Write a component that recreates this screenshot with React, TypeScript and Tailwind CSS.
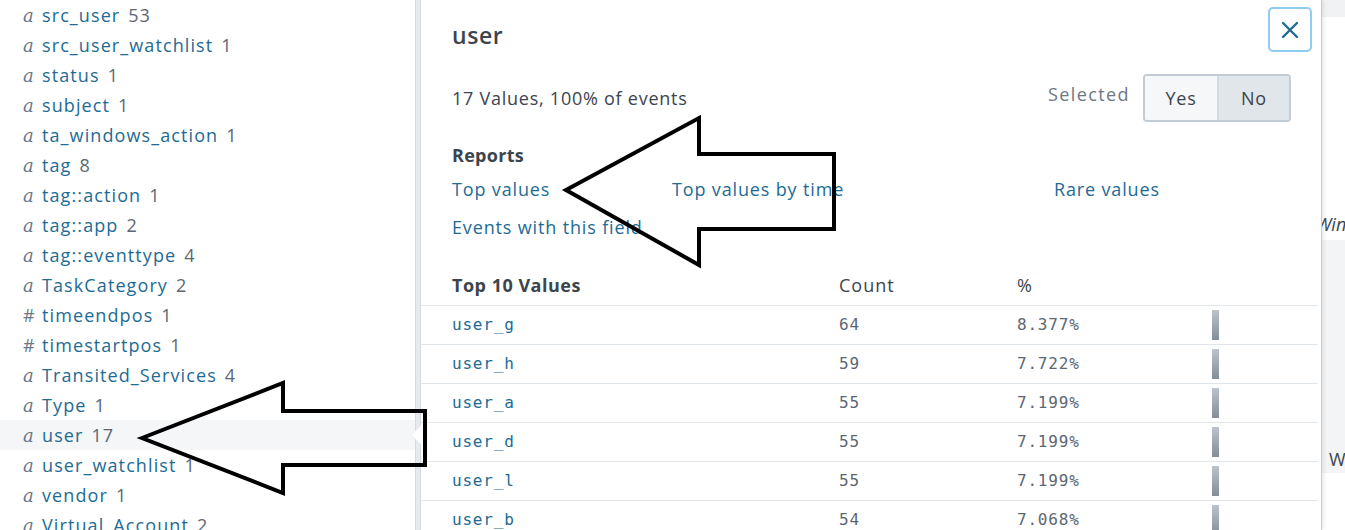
import React from "react";

type Field = { type: "a" | "#"; name: string; count: number };

const fields: Field[] = [
  { type: "a", name: "src_user", count: 53 },
  { type: "a", name: "src_user_watchlist", count: 1 },
  { type: "a", name: "status", count: 1 },
  { type: "a", name: "subject", count: 1 },
  { type: "a", name: "ta_windows_action", count: 1 },
  { type: "a", name: "tag", count: 8 },
  { type: "a", name: "tag::action", count: 1 },
  { type: "a", name: "tag::app", count: 2 },
  { type: "a", name: "tag::eventtype", count: 4 },
  { type: "a", name: "TaskCategory", count: 2 },
  { type: "#", name: "timeendpos", count: 1 },
  { type: "#", name: "timestartpos", count: 1 },
  { type: "a", name: "Transited_Services", count: 4 },
  { type: "a", name: "Type", count: 1 },
  { type: "a", name: "user", count: 17 },
  { type: "a", name: "user_watchlist", count: 1 },
  { type: "a", name: "vendor", count: 1 },
  { type: "a", name: "Virtual_Account", count: 2 },
];

const topValues = [
  { value: "user_g", count: 64, pct: "8.377%" },
  { value: "user_h", count: 59, pct: "7.722%" },
  { value: "user_a", count: 55, pct: "7.199%" },
  { value: "user_d", count: 55, pct: "7.199%" },
  { value: "user_l", count: 55, pct: "7.199%" },
  { value: "user_b", count: 54, pct: "7.068%" },
];

const sans = "font-['Open_Sans','Lato',sans-serif]";

const FieldRow: React.FC<{ field: Field; active?: boolean }> = ({ field, active }) => (
  <div className={"flex items-center h-[30px] pl-[23px] text-[18px] " + (active ? "bg-[#f4f6f8]" : "")}>
    <span
      className={
        "w-[19px] text-[#6b7785] " +
        (field.type === "a" ? "font-['DejaVu_Serif',serif] italic text-[18px]" : "text-[18px]")
      }
    >
      {field.type}
    </span>
    <span className="text-[#1e6b94] tracking-[1.1px]">{field.name}</span>
    <span className="ml-[8px] text-[#5c6773] tracking-[1px]">{field.count}</span>
  </div>
);

const Arrows: React.FC = () => (
  <svg className="absolute inset-0 pointer-events-none" width="1345" height="530" viewBox="0 0 1345 530">
    <polygon
      points="142,438 283,383 283,411 425,411 425,465 283,465 283,493"
      fill="none"
      stroke="#000"
      strokeWidth="4"
      strokeLinejoin="miter"
    />
    <polygon
      points="566,190 699,118 699,154 834,154 834,229 699,229 699,265"
      fill="none"
      stroke="#000"
      strokeWidth="4"
      strokeLinejoin="miter"
    />
  </svg>
);

export default function App() {
  return (
    <div className={"relative w-[1345px] h-[530px] overflow-hidden bg-white flex " + sans}>
      {/* field list */}
      <div className="w-[415px] shrink-0 overflow-hidden">
        {fields.map((f) => (
          <FieldRow key={f.name} field={f} active={f.name === "user"} />
        ))}
      </div>
      {/* scrollbar strip */}
      <div className="w-[6px] shrink-0 bg-[#e6e9ed] border-x border-[#d5dae0]" />

      {/* popover */}
      <div className="relative w-[901px] shrink-0 bg-white border-r border-[#c9ced4] shadow-[2px_0_3px_rgba(0,0,0,0.08)]">
        <div className="absolute left-[-10px] top-[425px] w-0 h-0 border-y-[10px] border-y-transparent border-r-[10px] border-r-[#eef0f3]" />
        <div className="absolute left-[-9px] top-[426px] w-0 h-0 border-y-[9px] border-y-transparent border-r-[9px] border-r-white" />

        <div className="flex items-start justify-between pl-[31px] pr-[9px] pt-[7px] h-[74px]">
          <div className="text-[23px] font-semibold text-[#3c444d] leading-none mt-[17px] tracking-[0.6px]">user</div>
          <button className="w-[44px] h-[45px] rounded-[5px] border-2 border-[#8ecdf2] flex items-center justify-center text-[#1e6b94]">
            <svg width="18" height="18" viewBox="0 0 18 18">
              <path d="M2 2L16 16M16 2L2 16" stroke="currentColor" strokeWidth="2.4" strokeLinecap="round" />
            </svg>
          </button>
        </div>

        <div className="flex items-center justify-between pl-[31px] pr-[30px] h-[48px] tracking-[0.75px]">
          <div className="text-[18px] text-[#3c444d]">17 Values, 100% of events</div>
          <div className="flex items-center">
            <span className="text-[18px] text-[#6b7785] mr-[13px] -mt-[8px] tracking-[1.4px]">Selected</span>
            <div className="flex h-[48px] rounded-[4px] border-2 border-[#c3cbd4] overflow-hidden text-[18px] text-[#3c444d]">
              <div className="w-[74px] flex items-center justify-center bg-[#f5f7f9] border-r-2 border-[#d5dae0]">Yes</div>
              <div className="w-[70px] flex items-center justify-center bg-[#e1e6eb]">No</div>
            </div>
          </div>
        </div>

        <div className="pl-[31px] mt-[21px] tracking-[0.85px]">
          <div className="text-[18px] font-bold text-[#3c444d] h-[24px] leading-[24px] tracking-[0.3px]">Reports</div>
          <div className="grid grid-cols-[220px_382px_1fr] text-[18px] text-[#1e6b94] mt-[10px] gap-y-[14px] leading-[24px]">
            <span>Top values</span>
            <span>Top values by time</span>
            <span>Rare values</span>
            <span>Events with this field</span>
          </div>
        </div>

        <div className="mt-[27px] pr-[3px]">
          <div className="grid grid-cols-[387px_178px_1fr] pl-[31px] h-[40px] items-center border-b border-[#e1e6eb] text-[18px] text-[#3c444d] tracking-[1px]">
            <span className="font-bold tracking-[0.5px]">Top 10 Values</span>
            <span>Count</span>
            <span>%</span>
          </div>
          {topValues.map((v) => (
            <div
              key={v.value}
              className="grid grid-cols-[387px_178px_195px_1fr] pl-[31px] h-[39px] items-center border-b border-[#e1e6eb] font-['DejaVu_Sans_Mono',monospace] text-[16px] tracking-[0.8px]"
            >
              <span className="text-[#1e6b94]">{v.value}</span>
              <span className="text-[#5c6773]">{v.count}</span>
              <span className="text-[#5c6773]">{v.pct}</span>
              <span className="w-[7px] h-[30px] bg-gradient-to-b from-[#bcc3cb] to-[#848d98]" />
            </div>
          ))}
        </div>
      </div>

      {/* page behind */}
      <div className="flex-1 flex flex-col bg-white">
        <div className="h-[17px] bg-[#f0f2f4]" />
        <div className="h-[223px] flex items-end pb-[2px] text-[18px] text-[#3c444d] italic whitespace-nowrap -ml-[6px]">Win</div>
        <div className="h-[233px] bg-[#f2f4f6] flex items-end pb-[0px] text-[18px] text-[#3c444d] whitespace-nowrap pl-[7px]">W</div>
        <div className="flex-1 bg-white" />
      </div>

      <Arrows />
    </div>
  );
}
